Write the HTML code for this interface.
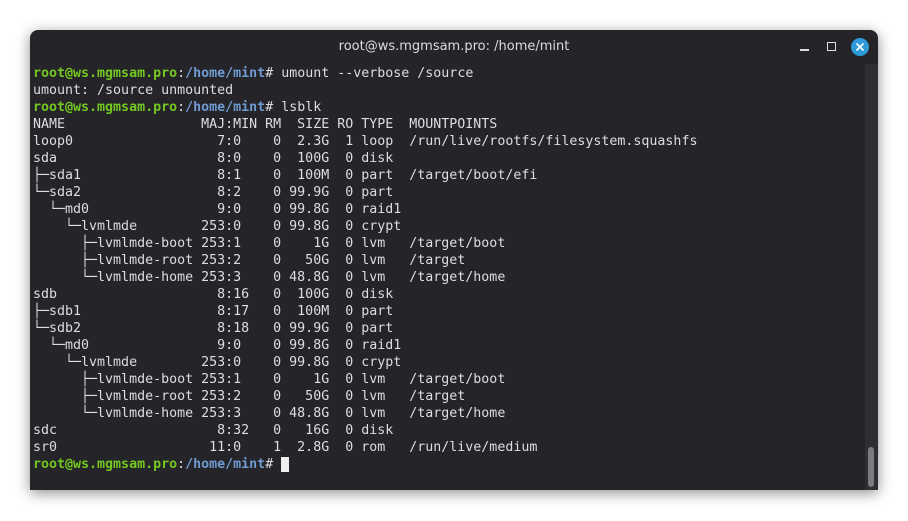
<!DOCTYPE html>
<html><head><meta charset="utf-8"><style>
html,body{margin:0;width:908px;height:521px;background:#fff;overflow:hidden}
.win{position:absolute;left:30px;top:30px;width:848px;height:460px;background:#242429;border-radius:8px 8px 0 0;box-shadow:0 3px 14px rgba(0,0,0,.45)}
.title{position:absolute;left:0;right:0;top:9px;text-align:center;color:#dcdcdc;font:13px "DejaVu Sans","Liberation Sans",sans-serif}
.min{position:absolute;left:800px;top:49px;width:9px;height:1.5px;background:#ddd}
.max{position:absolute;left:827px;top:42px;width:7px;height:7px;border:1.3px solid #ddd}
.close{position:absolute;left:851px;top:38px;width:18px;height:18px;border-radius:50%;background:#2c9ad8}
.sb{position:absolute;left:865px;top:64px;width:13px;height:426px;background:#2e2e33}
.th{position:absolute;left:868px;top:447px;width:6px;height:40px;border-radius:3px;background:#7b7b80}
pre{position:absolute;left:33px;top:65px;margin:0;font:13.3px/17px "DejaVu Sans Mono","Liberation Mono",monospace;color:#dedede}
.g{color:#74c820;font-weight:bold}.b{color:#6f9bd0;font-weight:bold}
.cur{background:#f0f0f0;color:#f0f0f0}
</style></head><body>
<div class="win"><div class="title">root@ws.mgmsam.pro: /home/mint</div></div>
<div class="min"></div><div class="max"></div>
<div class="close"><svg width="18" height="18"><path d="M5.5 5.5L12.5 12.5M12.5 5.5L5.5 12.5" stroke="#fff" stroke-width="1.6"/></svg></div>
<div class="sb"></div><div class="th"></div>
<pre><span class="g">root@ws.mgmsam.pro</span>:<span class="b">/home/mint</span># umount --verbose /source
umount: /source unmounted
<span class="g">root@ws.mgmsam.pro</span>:<span class="b">/home/mint</span># lsblk
NAME                 MAJ:MIN RM  SIZE RO TYPE  MOUNTPOINTS
loop0                  7:0    0  2.3G  1 loop  /run/live/rootfs/filesystem.squashfs
sda                    8:0    0  100G  0 disk
├─sda1                 8:1    0  100M  0 part  /target/boot/efi
└─sda2                 8:2    0 99.9G  0 part
  └─md0                9:0    0 99.8G  0 raid1
    └─lvmlmde        253:0    0 99.8G  0 crypt
      ├─lvmlmde-boot 253:1    0    1G  0 lvm   /target/boot
      ├─lvmlmde-root 253:2    0   50G  0 lvm   /target
      └─lvmlmde-home 253:3    0 48.8G  0 lvm   /target/home
sdb                    8:16   0  100G  0 disk
├─sdb1                 8:17   0  100M  0 part
└─sdb2                 8:18   0 99.9G  0 part
  └─md0                9:0    0 99.8G  0 raid1
    └─lvmlmde        253:0    0 99.8G  0 crypt
      ├─lvmlmde-boot 253:1    0    1G  0 lvm   /target/boot
      ├─lvmlmde-root 253:2    0   50G  0 lvm   /target
      └─lvmlmde-home 253:3    0 48.8G  0 lvm   /target/home
sdc                    8:32   0   16G  0 disk
sr0                   11:0    1  2.8G  0 rom   /run/live/medium
<span class="g">root@ws.mgmsam.pro</span>:<span class="b">/home/mint</span># <span class="cur">_</span></pre>
</body></html>
